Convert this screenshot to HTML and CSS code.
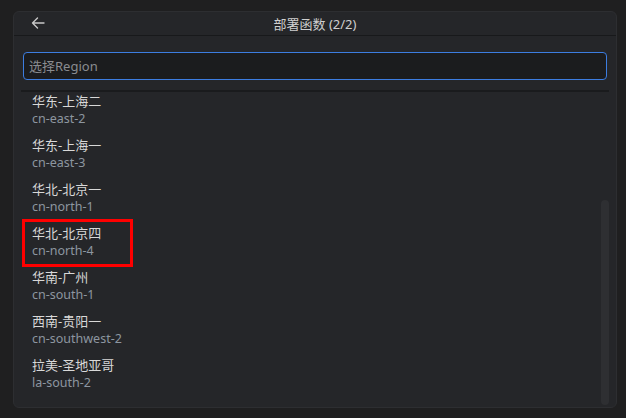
FILE: index.html
```html
<!DOCTYPE html>
<html lang="zh-CN">
<head>
<meta charset="utf-8">
<title>部署函数</title>
<link rel="stylesheet" href="styles.css">
</head>
<body>
<div class="panel">
  <div class="header">
    <span class="back">
      <svg width="14" height="12" viewBox="0 0 14 12"><path d="M13 6H1.5M6.5 1 1.5 6l5 5" fill="none" stroke="#c8c8c8" stroke-width="1.4" stroke-linecap="round" stroke-linejoin="round"/></svg>
    </span>
    <span class="title">部署函数 (2/2)</span>
  </div>
  <div class="content">
    <div class="input-row">
      <div class="input">选择Region</div>
    </div>
    <div class="list-wrap">
      <div class="shadow"></div>
      <ul class="list">
        <li class="item"><span class="label">华东-上海二</span><span class="desc">cn-east-2</span></li>
        <li class="item"><span class="label">华东-上海一</span><span class="desc">cn-east-3</span></li>
        <li class="item"><span class="label">华北-北京一</span><span class="desc">cn-north-1</span></li>
        <li class="item marked"><span class="label">华北-北京四</span><span class="desc">cn-north-4</span><span class="highlight"></span></li>
        <li class="item"><span class="label">华南-广州</span><span class="desc">cn-south-1</span></li>
        <li class="item"><span class="label">西南-贵阳一</span><span class="desc">cn-southwest-2</span></li>
        <li class="item"><span class="label">拉美-圣地亚哥</span><span class="desc">la-south-2</span></li>
      </ul>
      <div class="scrollbar"></div>
    </div>
  </div>
</div>
</body>
</html>
```
FILE: styles.css
```css
html, body {
  margin: 0;
  background: #1f1f20;
}
body {
  padding: 11px 0 0 13px;
  font-family: "Noto Sans", "Noto Sans CJK SC", sans-serif;
  font-size: 13px;
  color: #d6d6d6;
}
.panel {
  box-sizing: border-box;
  width: 604px;
  height: 397px;
  background: #252629;
  border: 1px solid #2d2e31;
  border-radius: 6px;
  display: flex;
  flex-direction: column;
  overflow: hidden;
}
.header {
  position: relative;
  height: 23px;
  border-bottom: 1px solid #18191b;
  display: flex;
  align-items: center;
  justify-content: center;
}
.back {
  position: absolute;
  left: 17px;
  top: 5px;
  display: flex;
}
.title {
  color: #cfcfcf;
  font-size: 13px;
  line-height: 18px;
  margin-left: 0;
}
.content {
  flex: 1;
  display: flex;
  flex-direction: column;
  min-height: 0;
}
.input-row {
  padding: 16px 9px 0 9px;
}
.input {
  box-sizing: border-box;
  height: 28px;
  border: 1px solid #3c7de0;
  border-radius: 4px;
  background: #1b1c1e;
  color: #8a8c90;
  padding: 0 5px;
  line-height: 26px;
  font-size: 13px;
}
.list-wrap {
  position: relative;
  flex: 1;
  margin-top: 10px;
  min-height: 0;
  overflow: hidden;
}
.shadow {
  height: 2px;
  margin: 0 7px;
  background: #1a1b1d;
}
.list {
  list-style: none;
  margin: 0;
  padding: 0 0 0 18px;
}
.item {
  position: relative;
  display: flex;
  flex-direction: column;
  padding-bottom: 8px;
}
.label {
  line-height: 18px;
  color: #d8d8d8;
  font-size: 13px;
}
.desc {
  line-height: 18px;
  color: #8d96a0;
  font-size: 12.5px;
}
.highlight {
  position: absolute;
  left: -10px;
  top: -5px;
  width: 111px;
  height: 48px;
  box-sizing: border-box;
  border: 3px solid #ff0000;
}
.scrollbar {
  position: absolute;
  right: 7px;
  top: 110px;
  bottom: 2px;
  width: 8px;
  border-radius: 4px;
  background: #2e2f32;
}
```
